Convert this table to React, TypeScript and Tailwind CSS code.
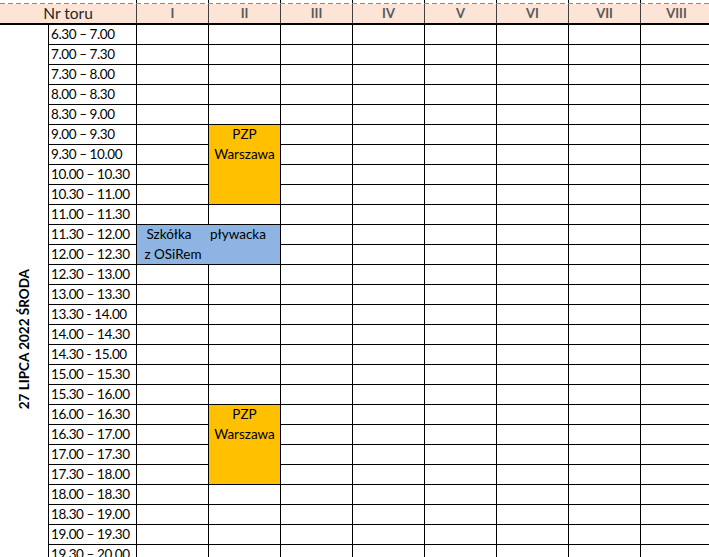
import React from "react";

const lanes = ["I", "II", "III", "IV", "V", "VI", "VII", "VIII"];

const pad = (h: number, m: number) => `${h}.${m === 0 ? "00" : "30"}`;

// half-hour slots from 6.30 to 22.00
const slots: string[] = [];
for (let i = 0; i < 31; i++) {
  const start = 6 * 60 + 30 + i * 30;
  const end = start + 30;
  const s = pad(Math.floor(start / 60), start % 60);
  const e = pad(Math.floor(end / 60), end % 60);
  const dash = s === "13.30" || s === "14.30" ? " - " : " – ";
  slots.push(s + dash + e);
}

const cols = "grid grid-cols-[48px_88px_repeat(8,72px)]";

function Orange({ row }: { row: number }) {
  return (
    <div
      className="row-span-4 border-l border-b border-black bg-[#ffc000] flex flex-col"
      style={{ gridRowStart: row + 2, gridColumnStart: 4 }}
    >
      <div className="h-[20px] leading-[19px] text-center">PZP</div>
      <div className="h-[20px] leading-[19px] text-center">Warszawa</div>
    </div>
  );
}

export default function App() {
  const body: React.ReactNode[] = [];
  slots.forEach((t, r) => {
    const row = r + 1;
    body.push(
      <div
        key={`t${r}`}
        className="border-l border-b border-black pl-[2px] leading-[19px] whitespace-nowrap tracking-[-0.4px] overflow-hidden"
        style={{ gridRowStart: row, gridColumnStart: 2 }}
      >
        {t}
      </div>
    );
    lanes.forEach((_, c) => {
      if (c === 1 && ((r >= 5 && r <= 8) || (r >= 19 && r <= 22))) return;
      if ((c === 0 || c === 1) && (r === 10 || r === 11)) return;
      body.push(
        <div
          key={`c${r}-${c}`}
          className="border-l border-b border-black"
          style={{ gridRowStart: row, gridColumnStart: c + 3 }}
        />
      );
    });
  });

  return (
    <div
      className="w-screen h-screen overflow-hidden bg-white text-black text-[13.5px]"
      style={{ fontFamily: "Lato, 'Noto Sans', sans-serif" }}
    >
      {/* strip above the header */}
      <div className={`${cols} h-[3px]`}>
        <div className="col-span-2" />
        {lanes.map((l) => (
          <div key={l} className="border-l border-black" />
        ))}
      </div>
      <div className="h-px w-[712px] bg-[repeating-linear-gradient(90deg,#8c8c8c_0_5px,transparent_5px_8px)]" />

      {/* header */}
      <div className={`${cols} h-[19px] bg-[#fce4d6]`}>
        <div className="col-span-2 text-center leading-[19px] text-[#262626] text-[15.5px]">
          Nr toru
        </div>
        {lanes.map((l) => (
          <div
            key={l}
            className="border-l border-[#404040] text-center leading-[19px] text-[#595959] font-bold text-[13px]"
          >
            {l}
          </div>
        ))}
      </div>
      <div className="h-[2px] w-[712px] bg-black" />

      {/* schedule */}
      <div className={`${cols} auto-rows-[20px]`}>
        <div
          className="row-span-31 flex items-center justify-center pt-[8px]"
          style={{ gridRowStart: 1, gridColumnStart: 1 }}
        >
          <span className="[writing-mode:vertical-rl] rotate-180 font-bold text-[13.5px] whitespace-nowrap">
            27 LIPCA 2022 ŚRODA
          </span>
        </div>
        {body}
        <Orange row={4} />
        <Orange row={18} />
        <div
          className="col-span-2 row-span-2 border-l border-b border-black bg-[#8db4e2] grid grid-cols-[72px_72px] auto-rows-[20px]"
          style={{ gridRowStart: 11, gridColumnStart: 3 }}
        >
          <div className="text-center leading-[19px] pr-[8px]">Szkółka</div>
          <div className="leading-[19px] pl-[2px] -ml-px">pływacka</div>
          <div className="text-center leading-[19px]">z OSiRem</div>
          <div />
        </div>
      </div>
    </div>
  );
}
